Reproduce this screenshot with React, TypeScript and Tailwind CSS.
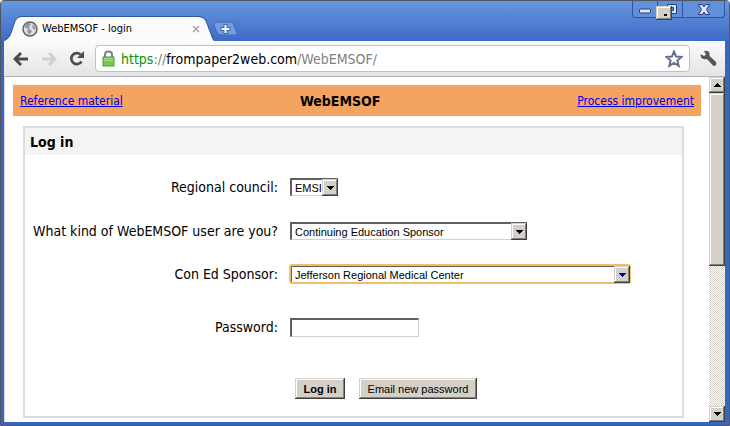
import type { ReactNode } from "react";

const tahoma = "font-['DejaVu_Sans_Condensed','Noto_Sans',sans-serif]";
const arial = "font-['Liberation_Sans',Arial,sans-serif]";
const raised =
  "bg-[#d4d0c8] shadow-[inset_-1px_-1px_0_#404040,inset_1px_1px_0_#d4d0c8,inset_-2px_-2px_0_#808080,inset_2px_2px_0_#ffffff]";
const sunken = "border-t-2 border-l-2 border-r border-b border-t-[#606060] border-l-[#606060] border-r-[#d4d0c8] border-b-[#d4d0c8] bg-white";

function Arrow({ up = false, color = "#000000" }: { up?: boolean; color?: string }) {
  return (
    <svg width="7" height="4" viewBox="0 0 7 4" shapeRendering="crispEdges" fill={color} aria-hidden="true">
      {up ? <path d="M3 0h1v1h1v1h1v1h1v1H0V3h1V2h1V1h1z" /> : <path d="M0 0h7v1H6v1H5v1H4v1H3V3H2V2H1V1H0z" />}
    </svg>
  );
}

function SelectBox({ id, value, width, focused = false }: { id: string; value: string; width: string; focused?: boolean }) {
  return (
    <div className={`relative ${width} ${focused ? "rounded-xs outline-2 -outline-offset-1 outline-[#f0be6a]" : ""}`}>
      <select id={id} defaultValue={value} className={`block h-[18px] w-full appearance-none rounded-none pl-[3px] text-[11px] leading-[14px] text-black outline-none ${arial} ${sunken}`}>
        <option>{value}</option>
      </select>
      <span className={`pointer-events-none absolute top-px right-0 flex h-[17px] w-4 items-center justify-center ${raised}`}>
        <Arrow color={focused ? "#000080" : "#000000"} />
      </span>
    </div>
  );
}

function Row({ id, label, height, children }: { id: string; label: string; height: string; children: ReactNode }) {
  return (
    <div className={`flex items-center gap-3 ${height}`}>
      <label htmlFor={id} className="w-[253px] shrink-0 text-right text-[14px] leading-5 whitespace-nowrap">
        {label}
      </label>
      {children}
    </div>
  );
}

function TitleBar() {
  return (
    <header className="flex h-10 items-start bg-linear-to-b from-[#6796e0] to-[#3e6bc6] pr-1">
      <div className="relative mt-[15px] ml-[3px] h-[25px] w-[210px]">
        <svg className="absolute inset-0" width="210" height="25" viewBox="0 0 210 25" aria-hidden="true">
          <path d="M0 25C4 24 6 20 7 17L11 5Q13 1 17 1H194Q200 1 202 5L207 18Q209 24 210 25Z" fill="#fbfbfb" />
          <path d="M0 24.5C4 23 6 20 7 17L11 5Q13 .5 17 .5H194Q200 .5 202 5L207 18Q209 24 210 24.5" fill="none" stroke="#31569c" />
        </svg>
        <div className="relative flex h-full items-center pr-2.5 pl-[18px]">
          <svg width="16" height="16" viewBox="0 0 16 16" aria-hidden="true">
            <circle cx="8" cy="8" r="7" fill="#e2e2e2" stroke="#626262" strokeWidth="1.5" />
            <path d="M3 4L5 2H8L9 4 7 5 8 7 6 8 4 7 2 6ZM5 9L7 8 10 9.500 9 12 7 14 6 12ZM10 3L12 4 14 7 13 9 11 8 10 6 11 5Z" fill="#999" />
          </svg>
          <span className="ml-1 flex-1 text-[11px] leading-4 whitespace-nowrap text-black">WebEMSOF - login</span>
          <button type="button" aria-label="Close tab" className="flex h-4 w-4 items-center justify-center">
            <svg width="8" height="8" viewBox="0 0 8 8" stroke="#a3a3a3" strokeWidth="1.5"><path d="M1 1l6 6M7 1L1 7" /></svg>
          </button>
        </div>
      </div>
      <button type="button" aria-label="New tab" className="mt-5 -ml-px">
        <svg width="25" height="16" viewBox="0 0 25 16">
          <path d="M3 1H17Q20 1 21 4L24 12Q24 14 22 14H8Q5 14 4 11L1 4Q0 1 3 1Z" fill="#729de1" stroke="#4169b3" />
          <path d="M12.5 3v10M7.500 8h10" stroke="#426aad" strokeWidth="4" />
          <path d="M12.500 4v8M8.500 8h8" stroke="#fff" strokeWidth="2" />
        </svg>
      </button>
      <div className="relative ml-auto flex h-[17px] w-[93px] rounded-b border border-t-0 border-[#31549e] bg-[#628fd9]">
        <button type="button" aria-label="Minimize" className="flex w-[25px] items-center justify-center border-r border-[#31549e] pt-1">
          <svg width="12" height="6" viewBox="0 0 12 6"><rect x=".5" y="1" width="11" height="4" rx="1" fill="#d9e6fa" stroke="#263f72" /></svg>
        </button>
        <button type="button" aria-label="Restore" className="flex w-[25px] items-center justify-center border-r border-[#31549e]">
          <svg width="13" height="11" viewBox="0 0 13 11"><path d="M3.500 .5h9v9h-9zM6.500 3.500v3h3v-3z" fill="#d9e6fa" stroke="#263f72" /></svg>
        </button>
        <button type="button" aria-label="Close" className="flex flex-1 items-center justify-center">
          <svg width="12" height="11" viewBox="0 0 12 11"><path d="M.5 .5h4L6 3 7.500 .5h4L8.500 5.500l3 5h-4L6 8l-1.500 2.500h-4l3-5z" fill="#d9e6fa" stroke="#263f72" /></svg>
        </button>
        <div className={`absolute top-[5px] left-[23px] h-3.5 w-4 ${raised}`}>
          <div className="mt-2 ml-2 h-0.5 w-[3px] bg-black" />
        </div>
      </div>
    </header>
  );
}

function Toolbar() {
  return (
    <nav className="flex h-9 items-center border-b border-[#b1b3bd] bg-linear-to-b from-[#fbfbfb] to-[#e4e4e4] pr-2 pl-[9px]">
      <button type="button" aria-label="Back">
        <svg width="16" height="14" viewBox="0 0 16 14" fill="none" stroke="#4c4c4c" strokeWidth="3"><path d="M15 7H3M8 1L2 7l6 6" /></svg>
      </button>
      <button type="button" aria-label="Forward" className="ml-3">
        <svg width="16" height="14" viewBox="0 0 16 14" fill="none" stroke="#cfcfcf" strokeWidth="3"><path d="M1 7h12M8 1l6 6-6 6" /></svg>
      </button>
      <button type="button" aria-label="Reload" className="ml-3">
        <svg width="16" height="15" viewBox="0 0 16 15" fill="none"><path d="M12.500 10.500A5.500 5.500 0 1 1 11.500 3.500" stroke="#4c4c4c" strokeWidth="2.700" /><path d="M15 0v7H8Z" fill="#4c4c4c" /></svg>
      </button>
      <div className="ml-2.5 flex h-[27px] min-w-0 flex-1 items-center rounded border border-[#bfc1c4] bg-white px-1.5">
        <svg width="13" height="17" viewBox="0 0 13 17" aria-hidden="true">
          <path d="M3 8V4.500Q3 1.500 6.500 1.500T10 4.500V8" fill="none" stroke="#828282" strokeWidth="2" />
          <rect x="1" y="7" width="11" height="9" fill="#74ca55" stroke="#4c9d38" />
          <path d="M2 8.500h9M2 10.500h9" stroke="#a6e28e" />
        </svg>
        <div className="ml-1.5 flex-1 text-[14px] leading-5 whitespace-nowrap text-[#808080]">
          <span className="text-[#079507]">https</span>://<span className="text-black">frompaper2web.com</span>/WebEMSOF/
        </div>
        <button type="button" aria-label="Bookmark this page">
          <svg width="18" height="18" viewBox="0 0 18 18"><path d="M9 1.500l2.100 5.100 5.400.4-4.100 3.500 1.300 5.400L9 13l-4.700 2.900 1.300-5.400L1.500 7l5.400-.4z" fill="#fff" stroke="#66738f" strokeWidth="2" /></svg>
        </button>
      </div>
      <button type="button" aria-label="Settings" className="ml-2.5">
        <svg width="17" height="17" viewBox="0 0 17 17"><path d="M4 1Q8 0 9.500 3L9.600 6 16 12Q17 14 15.500 15.500 14 16.500 12.500 15L7 9Q3 10 1 7.500L.5 4 4 6 6 4.500z" fill="#555" /></svg>
      </button>
    </nav>
  );
}

export default function App() {
  return (
    <div className={`flex h-screen flex-col rounded-t border border-[#4f5561] bg-[#3766bc] text-black ${tahoma}`}>
      <TitleBar />
      <div className="flex min-h-0 flex-1 flex-col border-r-4 border-b-3 border-l-3 border-[#3766bc]">
        <Toolbar />
        <div className="flex min-h-0 flex-1 border-l border-[#d8d8d8] bg-white">
          <main className="min-w-0 flex-1 overflow-hidden px-2 pt-2">
            <div className="grid h-[31px] grid-cols-[28fr_39fr_33fr] items-center bg-[#f4a460] px-[7px] text-[12px] leading-4">
              <a href="#reference" className="text-[#0000ee] underline">Reference material</a>
              <h1 className="text-center text-[14px] leading-5 font-bold">WebEMSOF</h1>
              <a href="#process" className="text-right text-[#0000ee] underline">Process improvement</a>
            </div>
            <form className="mt-2.5 mr-[17px] ml-2.5 border-2 border-[#dcdcdc] pb-[17px]" onSubmit={(e) => e.preventDefault()}>
              <h2 className="mb-2.5 h-[27px] bg-[#f4f4f4] px-[5px] text-[14px] leading-7 font-bold">Log in</h2>
              <Row id="council" label="Regional council:" height="h-11">
                <SelectBox id="council" value="EMSI" width="w-12" />
              </Row>
              <Row id="kind" label="What kind of WebEMSOF user are you?" height="h-11">
                <SelectBox id="kind" value="Continuing Education Sponsor" width="w-[237px]" />
              </Row>
              <Row id="sponsor" label="Con Ed Sponsor:" height="h-[42px]">
                <SelectBox id="sponsor" value="Jefferson Regional Medical Center" width="w-[340px]" focused />
              </Row>
              <Row id="password" label="Password:" height="h-16">
                <input id="password" type="password" className={`h-[19px] w-[129px] px-1 text-[11px] outline-none ${arial} ${sunken}`} />
              </Row>
              <div className={`mt-[19px] ml-[270px] flex gap-3.5 text-[11px] leading-4 ${arial}`}>
                <button type="submit" className={`h-[21px] w-[50px] font-bold ${raised}`}>Log in</button>
                <button type="button" className={`h-[21px] w-[118px] whitespace-nowrap ${raised}`}>Email new password</button>
              </div>
            </form>
          </main>
          <aside aria-label="Page scroll" className="flex w-4 shrink-0 flex-col bg-[repeating-conic-gradient(#ffffff_0%_25%,#d4d0c8_0%_50%)] bg-size-[2px_2px]">
            <button type="button" aria-label="Scroll up" className={`flex h-4 w-4 shrink-0 items-center justify-center ${raised}`}><Arrow up /></button>
            <div className={`h-1/2 w-4 ${raised}`} />
            <button type="button" aria-label="Scroll down" className={`mt-auto flex h-4 w-4 shrink-0 items-center justify-center ${raised}`}><Arrow /></button>
          </aside>
        </div>
      </div>
    </div>
  );
}
